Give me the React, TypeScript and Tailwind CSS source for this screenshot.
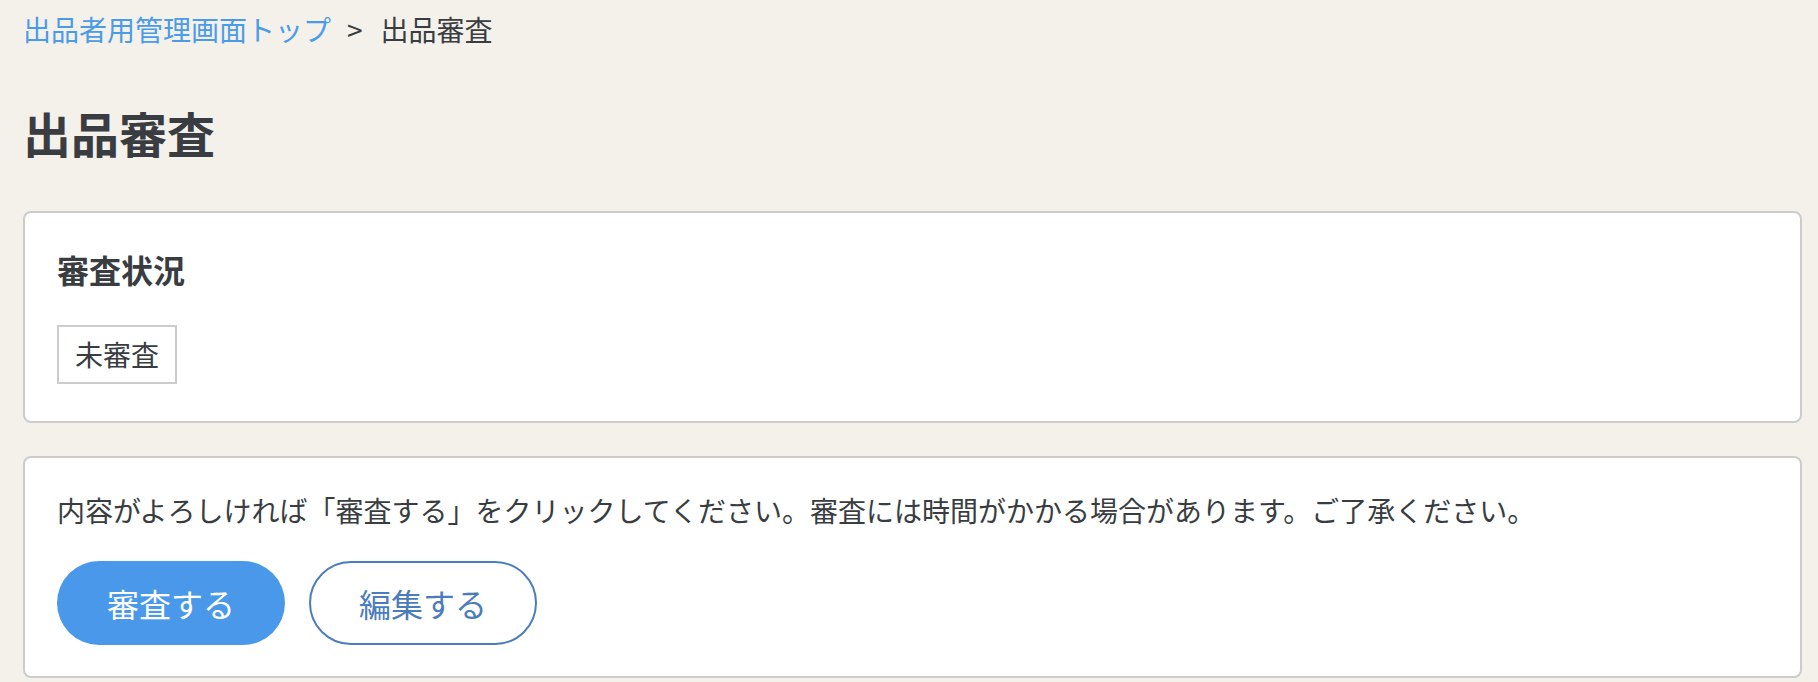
import React from "react";

export default function App() {
  return (
    <div
      className="min-h-[682px] bg-[#f4f1eb] pl-[23px] pr-[16px] pt-[9px] pb-[5px] text-[#393d41]"
      style={{ fontFamily: '"Noto Sans CJK JP", "Noto Sans", sans-serif' }}
    >
      <nav className="flex items-center text-[28px] leading-[40px]">
        <a className="text-[#4a9be8]" href="#">出品者用管理画面トップ</a>
        <span className="pl-[16px] pr-[18px] text-[28px]">&gt;</span>
        <span>出品審査</span>
      </nav>

      <h1 className="mt-[47px] text-[48px] font-bold leading-[72px]">出品審査</h1>

      <section className="mt-[43px] rounded-[8px] border-2 border-[#cccccc] bg-white px-[32px] pt-[32px] pb-[37px]">
        <h2 className="text-[32px] font-bold leading-[48px]">審査状況</h2>
        <div className="mt-[32px] inline-block border-2 border-[#cccccc] px-[16px] py-[10px] text-[28px] leading-[35px]">
          未審査
        </div>
      </section>

      <section className="mt-[33px] rounded-[8px] border-2 border-[#cccccc] bg-white px-[32px] pt-[32px] pb-[31px]">
        <p className="text-[28px] leading-[40px]">
          内容がよろしければ「審査する」をクリックしてください。審査には時間がかかる場合があります。ご了承ください。
        </p>
        <div className="mt-[31px] flex gap-[24px]">
          <button className="flex h-[84px] w-[228px] items-center justify-center rounded-full bg-[#4a98e9] text-[32px] text-white">
            審査する
          </button>
          <button className="flex h-[84px] w-[228px] items-center justify-center rounded-full border-2 border-[#4b7dbd] bg-white text-[32px] text-[#4b7dbd]">
            編集する
          </button>
        </div>
      </section>
    </div>
  );
}
